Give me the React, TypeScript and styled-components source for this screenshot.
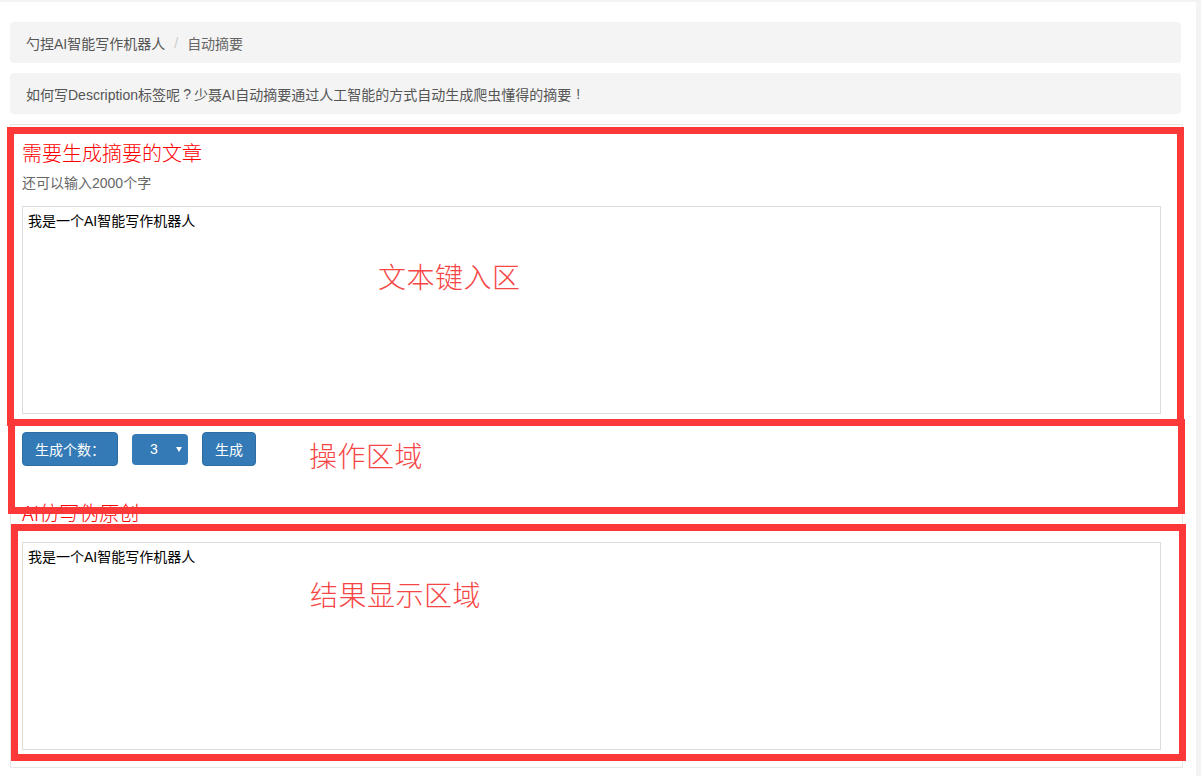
import React from "react";
import styled, { createGlobalStyle } from "styled-components";

const GlobalStyle = createGlobalStyle`
  html, body { margin: 0; padding: 0; }
  body {
    background: #f3f3f3;
    font-family: "Liberation Sans", "Noto Sans CJK SC", sans-serif;
    font-size: 14px;
    color: #333;
  }
  * { box-sizing: border-box; }
`;

const Root = styled.div`
  position: relative;
  width: 1201px;
  min-height: 776px;
  padding-top: 2px;
`;

const Page = styled.div`
  width: 1196px;
  min-height: 774px;
  background: #fff;
  padding: 20px 15px 0 10px;
  display: flex;
  flex-direction: column;
  gap: 10px;
`;

const GrayBar = styled.div`
  height: 41px;
  background: #f4f4f4;
  border-radius: 4px;
  padding: 0 16px;
  display: flex;
  align-items: center;
  font-size: 14px;
  color: #555;
`;

const Crumb = styled.span<{ $active?: boolean }>`
  color: ${(p) => (p.$active ? "#666" : "#555")};
`;

const Sep = styled.span`
  color: #ccc;
  margin: 0 9px;
`;

const FullPunct = styled.span`
  display: inline-block;
  width: 14px;
  text-align: center;
`;

const Card = styled.div`
  margin-right: -2px;
  border: 1px solid #e6e6e6;
  background: #fff;
  padding: 17px 21px 17px 11px;
  display: flex;
  flex-direction: column;
  align-items: flex-start;
`;

const Heading = styled.h3<{ $top?: number }>`
  margin: ${(p) => p.$top ?? 0}px 0 0;
  font-family: "Noto Sans CJK SC", sans-serif;
  font-size: 20px;
  line-height: 22px;
  font-weight: 300;
  color: #ff0000;
`;

const SubText = styled.div`
  margin-top: 9px;
  font-size: 14px;
  line-height: 20px;
  color: #666;
`;

const TextBox = styled.div<{ $top: number }>`
  margin-top: ${(p) => p.$top}px;
  width: 1139px;
  height: 208px;
  border: 1px solid #dddddd;
  padding: 4px 5px;
  font-size: 14px;
  line-height: 20px;
  color: #000;
`;

const ActionRow = styled.div`
  margin-top: 18px;
  display: flex;
  align-items: center;
`;

const Btn = styled.div<{ $gap?: number }>`
  margin-left: ${(p) => p.$gap ?? 0}px;
  height: 34px;
  padding: 0 12px;
  border: 1px solid #2e6da4;
  border-radius: 4px;
  background: #337ab7;
  color: #fff;
  font-size: 14px;
  display: flex;
  align-items: center;
`;

const SelectBox = styled.div`
  margin-left: 14px;
  width: 56px;
  height: 31px;
  border-radius: 4px;
  background: #337ab7;
  color: #fff;
  font-size: 14px;
  display: flex;
  align-items: center;
  padding-left: 18px;
`;

const Caret = styled.span`
  margin-left: 18px;
  width: 0;
  height: 0;
  border-left: 3px solid transparent;
  border-right: 3px solid transparent;
  border-top: 5px solid #fff;
`;

const Mark = styled.div`
  position: absolute;
  border: 7px solid #fd3838;
  pointer-events: none;
`;

const MarkLabel = styled.div`
  position: absolute;
  font-family: "Noto Sans CJK SC", sans-serif;
  font-weight: 300;
  font-size: 28px;
  line-height: 28px;
  color: #f64545;
  letter-spacing: 0.5px;
  white-space: nowrap;
`;

export default function App() {
  return (
    <>
      <GlobalStyle />
      <Root>
        <Page>
          <GrayBar>
            <Crumb>勺捏AI智能写作机器人</Crumb>
            <Sep>/</Sep>
            <Crumb $active>自动摘要</Crumb>
          </GrayBar>
          <GrayBar>
            如何写Description标签呢<FullPunct>?</FullPunct>少聂AI自动摘要通过人工智能的方式自动生成爬虫懂得的摘要<FullPunct>!</FullPunct>
          </GrayBar>
          <Card>
            <Heading>需要生成摘要的文章</Heading>
            <SubText>还可以输入2000个字</SubText>
            <TextBox $top={13}>我是一个AI智能写作机器人</TextBox>
            <ActionRow>
              <Btn>生成个数：</Btn>
              <SelectBox>
                3<Caret />
              </SelectBox>
              <Btn $gap={14}>生成</Btn>
            </ActionRow>
            <Heading $top={36}>AI仿写伪原创</Heading>
            <TextBox $top={18}>我是一个AI智能写作机器人</TextBox>
          </Card>
        </Page>

        <Mark style={{ left: 7, top: 127, width: 1177, height: 299 }} />
        <Mark style={{ left: 8, top: 419, width: 1177, height: 95 }} />
        <Mark style={{ left: 11, top: 524, width: 1175, height: 237 }} />
        <MarkLabel style={{ left: 378, top: 262 }}>文本键入区</MarkLabel>
        <MarkLabel style={{ left: 309, top: 441 }}>操作区域</MarkLabel>
        <MarkLabel style={{ left: 310, top: 580 }}>结果显示区域</MarkLabel>
      </Root>
    </>
  );
}
